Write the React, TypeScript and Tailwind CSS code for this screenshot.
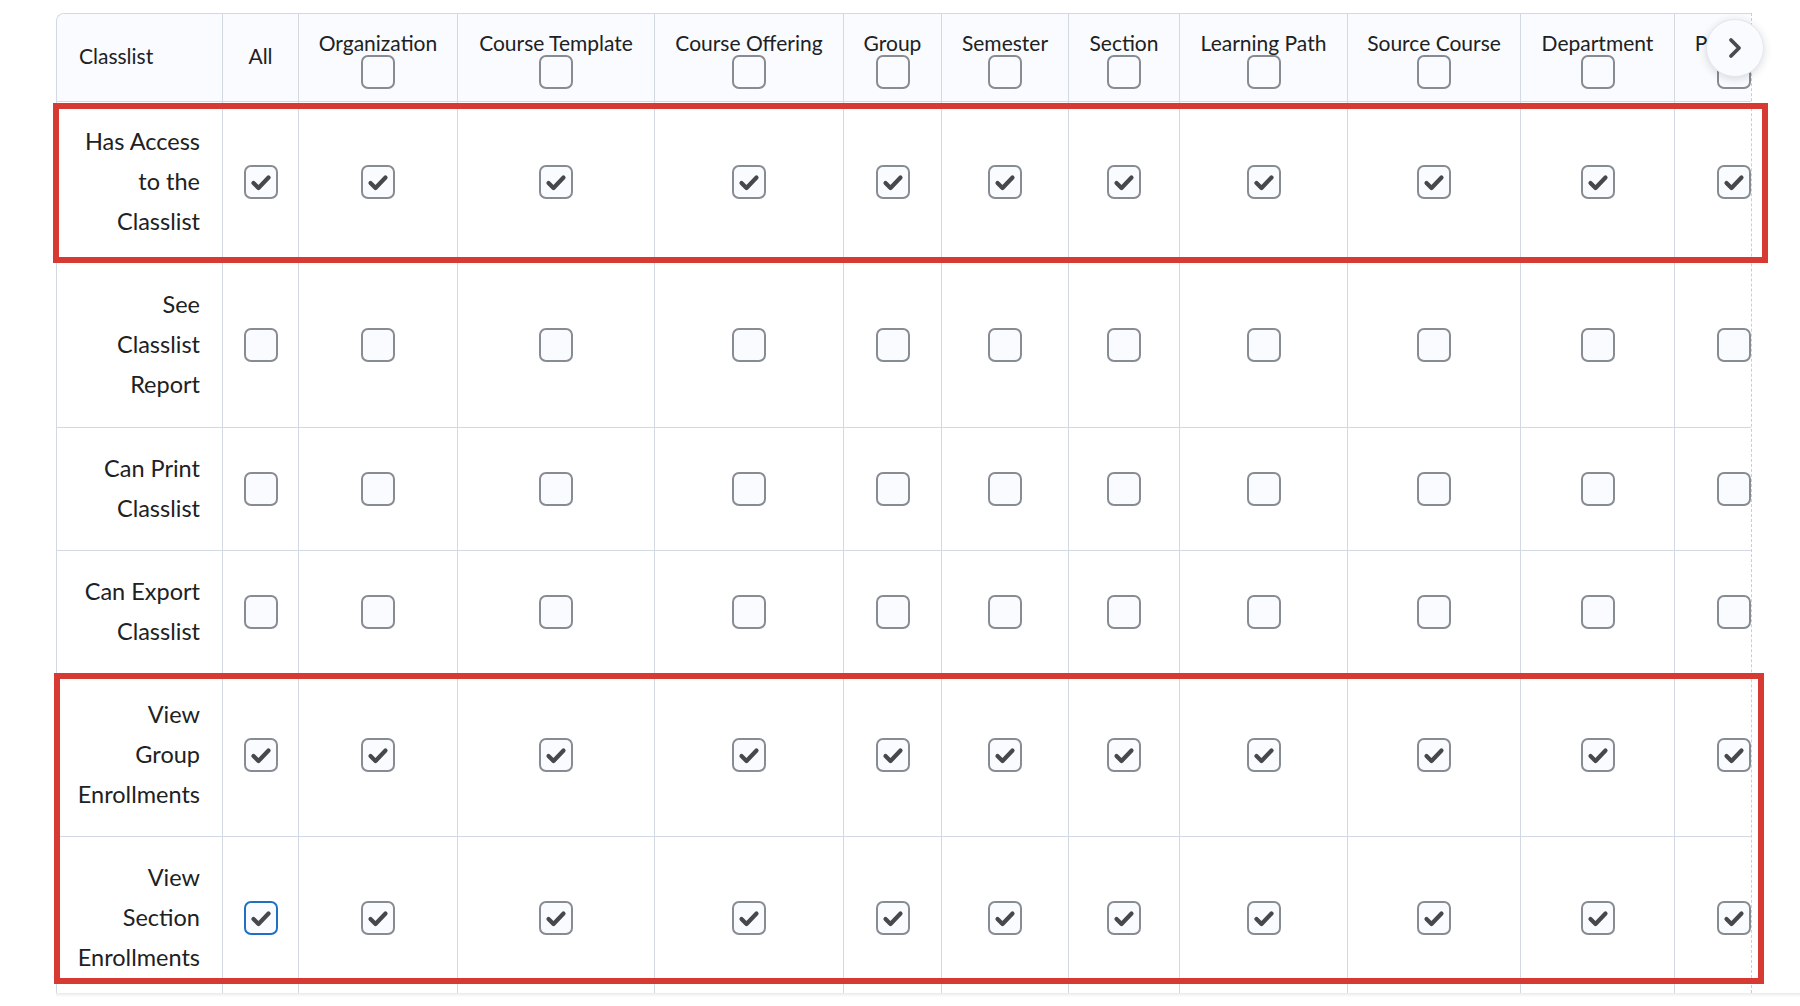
import React from 'react';

type Column = { name: string };

const columns: Column[] = [
  { name: 'Organization' },
  { name: 'Course Template' },
  { name: 'Course Offering' },
  { name: 'Group' },
  { name: 'Semester' },
  { name: 'Section' },
  { name: 'Learning Path' },
  { name: 'Source Course' },
  { name: 'Department' },
  { name: 'Program' },
];

interface PermissionRow {
  lines: string[];
  checked: boolean;
  pad: string;
  focusAll?: boolean;
}

const rows: PermissionRow[] = [
  { lines: ['Has Access', 'to the', 'Classlist'], checked: true, pad: 'pt-[19px] pb-[21px]' },
  { lines: ['See', 'Classlist', 'Report'], checked: false, pad: 'pt-[21px] pb-[23px]' },
  { lines: ['Can Print', 'Classlist'], checked: false, pad: 'pt-[20px] pb-[22px]' },
  { lines: ['Can Export', 'Classlist'], checked: false, pad: 'pt-[20px] pb-[22px]' },
  { lines: ['View', 'Group', 'Enrollments'], checked: true, pad: 'pt-[20px] pb-[22px]' },
  {
    lines: ['View', 'Section', 'Enrollments'],
    checked: true,
    pad: 'pt-[20px] pb-[22px]',
    focusAll: true,
  },
];

const cellBase = 'border-r border-b border-[#d3d9e3]';

const Checkbox: React.FC<{ checked?: boolean; focused?: boolean }> = ({
  checked,
  focused,
}) => (
  <div
    className={
      focused
        ? 'flex h-[34px] w-[34px] shrink-0 items-center justify-center rounded-[7px] border-2 border-[#1f6fc5] bg-[#f9fbff]'
        : 'flex h-[34px] w-[34px] shrink-0 items-center justify-center rounded-[7px] border-2 border-[#878c92] bg-[#f9fbff]'
    }
  >
    {checked && (
      <svg width="30" height="30" viewBox="0 0 30 30" fill="none">
        <polyline
          points="7.5,16 12.5,21 22.5,10.5"
          stroke="#46494c"
          strokeWidth="4.2"
          strokeLinecap="round"
          strokeLinejoin="round"
        />
      </svg>
    )}
  </div>
);

const HeaderRow: React.FC = () => (
  <>
    <div
      className={`${cellBase} flex h-[88px] items-center rounded-tl-[8px] bg-[#f9fbff] pb-[4px] pl-[22px]`}
    >
      Classlist
    </div>
    <div className={`${cellBase} flex h-[88px] items-center justify-center bg-[#f9fbff] pb-[4px]`}>
      All
    </div>
    {columns.map((c) => (
      <div
        key={c.name}
        className={`${cellBase} flex h-[88px] flex-col items-center overflow-hidden bg-[#f9fbff] pt-[17px]`}
      >
        <span className="whitespace-nowrap leading-[24px]">{c.name}</span>
        <Checkbox />
      </div>
    ))}
  </>
);

const BodyRow: React.FC<{ row: PermissionRow }> = ({ row }) => (
  <>
    <div
      className={`${cellBase} ${row.pad} flex flex-col items-end justify-center pr-[22px] text-right text-[23.5px] leading-[40px]`}
    >
      {row.lines.map((l) => (
        <span key={l} className="whitespace-nowrap">
          {l}
        </span>
      ))}
    </div>
    <div className={`${cellBase} flex items-center justify-center`}>
      <Checkbox checked={row.checked} focused={row.focusAll} />
    </div>
    {columns.map((c) => (
      <div key={c.name} className={`${cellBase} flex items-center justify-center`}>
        <Checkbox checked={row.checked} />
      </div>
    ))}
  </>
);

export default function App() {
  return (
    <div className="relative h-[1006px] w-[1800px] overflow-hidden bg-white font-[Lato,sans-serif] text-[21px] text-[#202122]">
      <div className="pl-[56px] pt-[13px]">
        <div className="h-[980px] w-[1696px] overflow-hidden border-r border-dashed border-[#c9ced6]">
          <div className="grid w-max grid-cols-[166px_76px_159px_197px_189px_98px_127px_111px_168px_173px_154px_118px] rounded-tl-[8px] border-l border-t border-[#d3d9e3]">
            <HeaderRow />
            {rows.map((r) => (
              <BodyRow key={r.lines.join(' ')} row={r} />
            ))}
          </div>
        </div>
        <div className="h-[4px] bg-linear-to-b from-[#e9e9e9] to-white" />
      </div>

      {/* highlight boxes drawn over the table */}
      <div className="pointer-events-none absolute left-[53px] top-[103px] h-[160px] w-[1715px] border-[6px] border-[#d63a33]" />
      <div className="pointer-events-none absolute left-[54px] top-[673px] h-[311px] w-[1710px] border-[6px] border-[#d63a33]" />

      {/* scroll next button */}
      <button className="absolute left-[1706px] top-[19px] flex h-[58px] w-[58px] items-center justify-center rounded-full border border-[#e3e7ee] bg-[#f9fbff] shadow-[0_2px_10px_rgba(0,0,0,0.14)]">
        <svg width="16" height="22" viewBox="0 0 16 22" fill="none">
          <polyline
            points="4,3 12,11 4,19"
            stroke="#494c4e"
            strokeWidth="3.8"
            strokeLinecap="round"
            strokeLinejoin="round"
          />
        </svg>
      </button>
    </div>
  );
}
